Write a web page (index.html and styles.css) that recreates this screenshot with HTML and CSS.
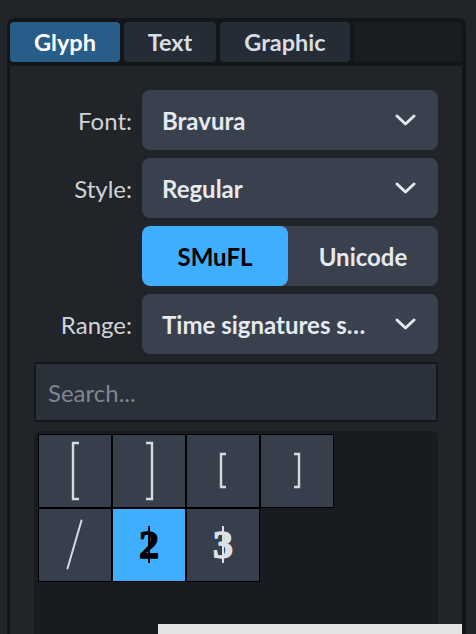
FILE: index.html
```html
<!DOCTYPE html>
<html>
<head>
<meta charset="utf-8">
<link rel="stylesheet" href="styles.css">
</head>
<body>
<div class="panel">
  <div class="tabs">
    <div class="tab tab-glyph active">Glyph</div>
    <div class="tab tab-text">Text</div>
    <div class="tab tab-graphic">Graphic</div>
    <div class="tab-fill"></div>
  </div>
  <div class="content">
    <div class="row">
      <span class="lbl">Font:</span>
      <div class="select"><span class="val">Bravura</span><svg class="chev" width="21" height="12" viewBox="0 0 21 12"><path d="M2 2 L10.5 10 L19 2" fill="none" stroke="#e4e7ec" stroke-width="3" stroke-linecap="round" stroke-linejoin="round"/></svg></div>
    </div>
    <div class="row">
      <span class="lbl">Style:</span>
      <div class="select"><span class="val">Regular</span><svg class="chev" width="21" height="12" viewBox="0 0 21 12"><path d="M2 2 L10.5 10 L19 2" fill="none" stroke="#e4e7ec" stroke-width="3" stroke-linecap="round" stroke-linejoin="round"/></svg></div>
    </div>
    <div class="row">
      <span class="lbl"></span>
      <div class="seg">
        <div class="seg-btn on">SMuFL</div>
        <div class="seg-btn">Unicode</div>
      </div>
    </div>
    <div class="row">
      <span class="lbl">Range:</span>
      <div class="select"><span class="val">Time signatures s…</span><svg class="chev" width="21" height="12" viewBox="0 0 21 12"><path d="M2 2 L10.5 10 L19 2" fill="none" stroke="#e4e7ec" stroke-width="3" stroke-linecap="round" stroke-linejoin="round"/></svg></div>
    </div>
    <div class="search">Search...</div>
    <div class="glyphs">
      <div class="grid">
        <div class="cell"><svg width="72" height="72" viewBox="0 0 72 72"><path d="M40 8 L34 8 L34 64 L40 64" fill="none" stroke="#d5d9df" stroke-width="2.4"/></svg></div>
        <div class="cell"><svg width="72" height="72" viewBox="0 0 72 72"><path d="M33 8 L39 8 L39 64 L33 64" fill="none" stroke="#d5d9df" stroke-width="2.4"/></svg></div>
        <div class="cell"><svg width="72" height="72" viewBox="0 0 72 72"><path d="M39 19 L34 19 L34 52 L39 52" fill="none" stroke="#d5d9df" stroke-width="2.4"/></svg></div>
        <div class="cell"><svg width="72" height="72" viewBox="0 0 72 72"><path d="M33 19 L38 19 L38 52 L33 52" fill="none" stroke="#d5d9df" stroke-width="2.4"/></svg></div>
        <div class="cell"><svg width="72" height="72" viewBox="0 0 72 72"><path d="M42.5 11.5 L28.5 59.5" fill="none" stroke="#d5d9df" stroke-width="2" stroke-linecap="round"/></svg></div>
        <div class="cell sel"><span class="digit">2</span></div>
        <div class="cell"><span class="digit">3</span></div>
      </div>
    </div>
  </div>
  <div class="tooltip"></div>
</div>
</body>
</html>
```
FILE: styles.css
```css
* { box-sizing: border-box; }
html, body { margin: 0; padding: 0; }
body {
  background: #212529;
  width: 476px;
  height: 634px;
  overflow: hidden;
  font-family: Lato, "Noto Sans", sans-serif;
}
.panel {
  position: relative;
  margin: 18px 0 0 7px;
  width: 459px;
  height: 616px;
  background: #131619;
  border-top: 4px solid #131619;
  border-left: 3px solid #131619;
  border-right: 4px solid #131619;
  border-radius: 7px 7px 0 0;
  display: flex;
  flex-direction: column;
}
.tabs {
  display: flex;
  gap: 4px;
  height: 40px;
  flex: none;
}
.tab {
  height: 40px;
  border-radius: 4px;
  background: #262c36;
  color: #d8dce3;
  font-weight: 700;
  font-size: 23.5px;
  display: flex;
  align-items: center;
  justify-content: center;
}
.tab.active { background: #275d88; color: #ffffff; }
.tab-glyph { width: 110px; }
.tab-text { width: 92px; }
.tab-graphic { width: 130px; }
.tab-fill {
  flex: 1;
  background: #191c20;
  border-top-right-radius: 4px;
}
.content {
  margin-top: 4px;
  flex: 1;
  background: #212529;
  padding: 24px 24px 0 24px;
  display: flex;
  flex-direction: column;
  gap: 8px;
  min-height: 0;
}
.row {
  display: flex;
  align-items: center;
  gap: 10px;
  height: 60px;
  flex: none;
}
.lbl {
  width: 98px;
  text-align: right;
  color: #cfd3d9;
  font-size: 24px;
}
.select {
  width: 296px;
  height: 60px;
  background: #38414d;
  border-radius: 8px;
  display: flex;
  align-items: center;
  justify-content: space-between;
  padding: 0 22px 0 20px;
  color: #e6e9ee;
  font-weight: 700;
  font-size: 24px;
}
.val { white-space: nowrap; }
.chev { display: block; }
.seg {
  width: 296px;
  height: 60px;
  display: flex;
  background: #38414d;
  border-radius: 8px;
  overflow: hidden;
}
.seg-btn {
  flex: 1;
  display: flex;
  align-items: center;
  justify-content: center;
  color: #e6e9ee;
  font-weight: 700;
  font-size: 24px;
}
.seg-btn.on {
  flex: none;
  width: 146px;
  background: #40aeff;
  color: #000;
  border-radius: 8px;
}
.search {
  height: 60px;
  flex: none;
  background: #2b313a;
  border: 2px solid #15181b;
  border-radius: 2px;
  padding-left: 12px;
  display: flex;
  align-items: center;
  color: #7e8691;
  font-size: 24px;
}
.glyphs {
  margin-top: 1px;
  flex: 1;
  width: 404px;
  background: #181b1f;
  border-radius: 6px 6px 0 0;
  padding: 3px 4px;
}
.grid {
  display: grid;
  grid-template-columns: repeat(4, 72px);
  grid-auto-rows: 72px;
  gap: 2px;
  padding: 1px;
}
.cell {
  background: #363f4b;
  box-shadow: 0 0 0 1px #000;
  display: flex;
  align-items: center;
  justify-content: center;
  position: relative;
}
.cell svg { display: block; }
.cell.sel { background: #40aeff; }
.digit {
  font-family: "Liberation Serif", serif;
  font-weight: 700;
  font-size: 40px;
  line-height: 1;
  color: #dde1e6;
  -webkit-text-stroke: 1.3px currentColor;
  position: relative;
}
.cell.sel .digit { color: #000; }
.digit::after {
  content: "";
  position: absolute;
  left: 50%;
  margin-left: -1px;
  top: 1px;
  width: 2px;
  height: 37px;
  background: currentColor;
}
.tooltip {
  position: absolute;
  left: 148px;
  top: 602px;
  width: 304px;
  height: 20px;
  background: #e3e3e3;
}
```
